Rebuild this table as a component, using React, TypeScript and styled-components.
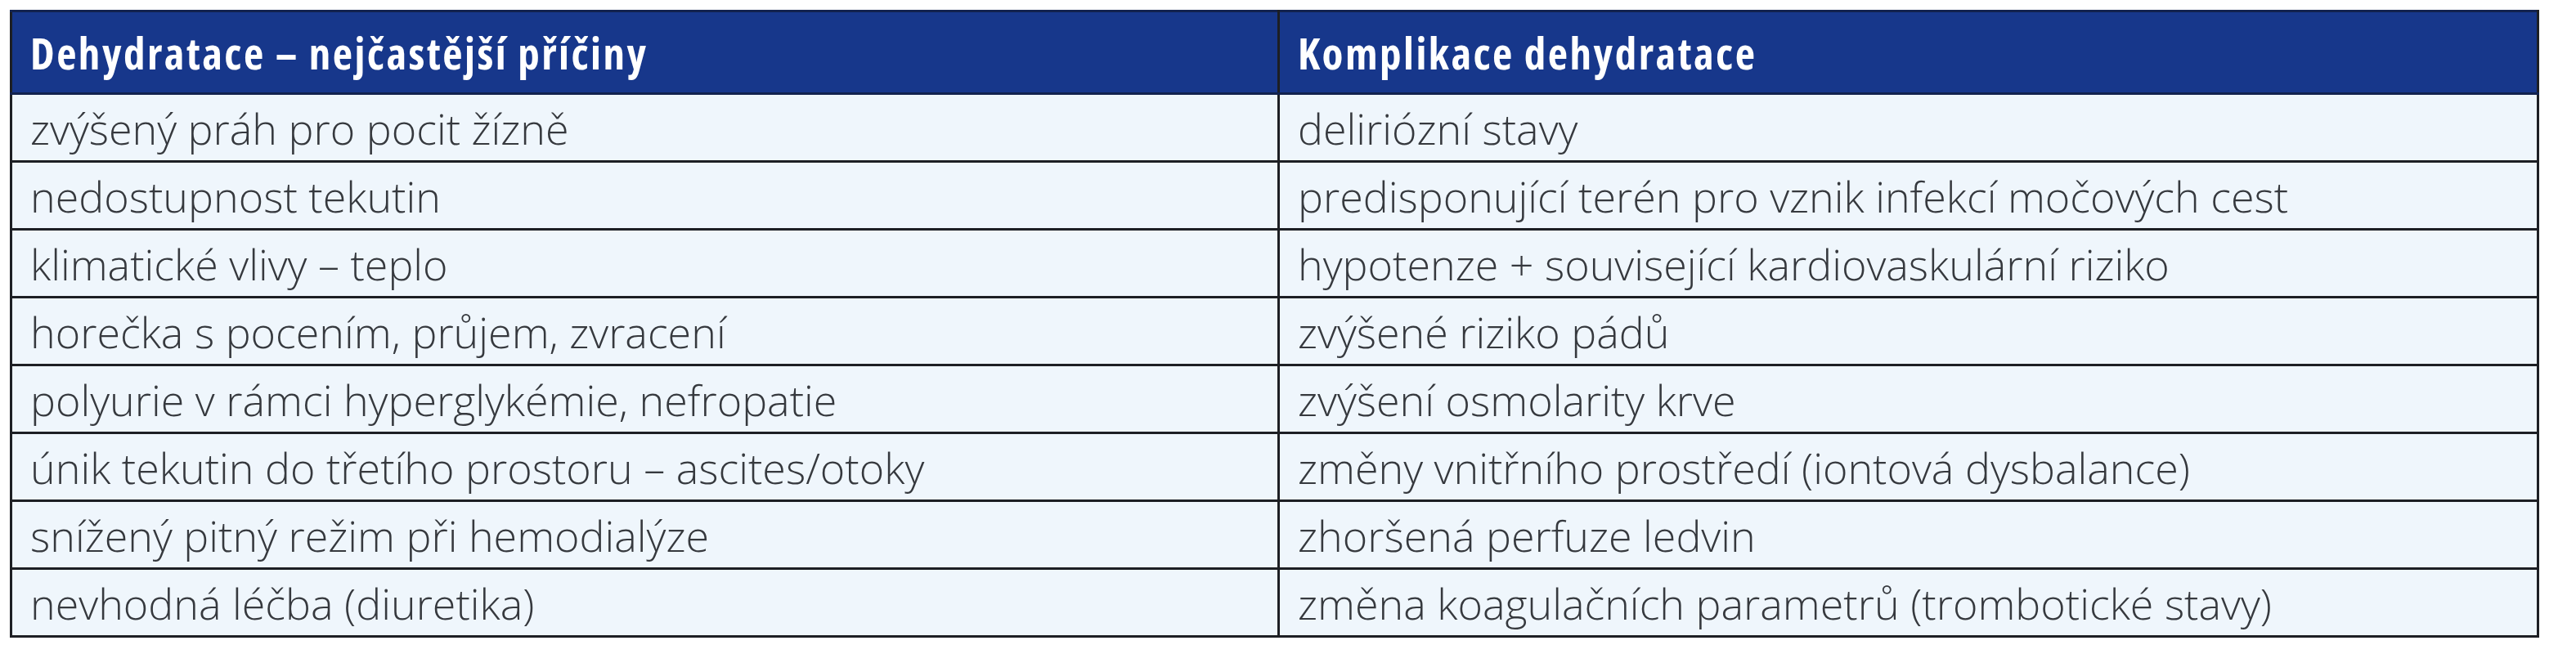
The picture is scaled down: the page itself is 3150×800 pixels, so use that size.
import * as React from 'react';
import styled, { createGlobalStyle } from 'styled-components';

const GlobalStyle = createGlobalStyle`
  html, body {
    margin: 0;
    padding: 0;
    background: #ffffff;
  }
`;

const Page = styled.div`
  padding: 12px 0 0 12px;
  width: 3150px;
  height: 800px;
  box-sizing: border-box;
  font-family: 'Open Sans', 'Liberation Sans', 'DejaVu Sans', sans-serif;
`;

const Table = styled.table`
  width: 3093px;
  border-collapse: collapse;
  table-layout: fixed;
  border: 3px solid #1d1f24;
`;

const HeadCell = styled.th`
  height: 98px;
  padding: 0 22px;
  background: #17378b;
  color: #ffffff;
  text-align: left;
  font-size: 53px;
  font-weight: 700;
  font-stretch: 75%;
  letter-spacing: 2.5px;
  border: 3px solid #12224e;
  border-left-color: #1d1f24;
  border-right-color: #1d1f24;
  white-space: nowrap;
`;

const Cell = styled.td`
  height: 80px;
  padding: 0 22px;
  background: #eff6fc;
  color: #36393e;
  font-size: 52px;
  font-weight: 300;
  border: 3px solid #1d1f24;
  white-space: nowrap;
  vertical-align: middle;
`;

type Row = [string, string];

const rows: Row[] = [
  ['zvýšený práh pro pocit žízně', 'deliriózní stavy'],
  ['nedostupnost tekutin', 'predisponující terén pro vznik infekcí močových cest'],
  ['klimatické vlivy – teplo', 'hypotenze + související kardiovaskulární riziko'],
  ['horečka s pocením, průjem, zvracení', 'zvýšené riziko pádů'],
  ['polyurie v rámci hyperglykémie, nefropatie', 'zvýšení osmolarity krve'],
  ['únik tekutin do třetího prostoru – ascites/otoky', 'změny vnitřního prostředí (iontová dysbalance)'],
  ['snížený pitný režim při hemodialýze', 'zhoršená perfuze ledvin'],
  ['nevhodná léčba (diuretika)', 'změna koagulačních parametrů (trombotické stavy)'],
];

export default function App() {
  return (
    <Page>
      <GlobalStyle />
      <Table>
        <colgroup>
          <col style={{ width: '1550px' }} />
          <col />
        </colgroup>
        <thead>
          <tr>
            <HeadCell>Dehydratace – nejčastější příčiny</HeadCell>
            <HeadCell>Komplikace dehydratace</HeadCell>
          </tr>
        </thead>
        <tbody>
          {rows.map(([cause, complication]) => (
            <tr key={cause}>
              <Cell>{cause}</Cell>
              <Cell>{complication}</Cell>
            </tr>
          ))}
        </tbody>
      </Table>
    </Page>
  );
}
